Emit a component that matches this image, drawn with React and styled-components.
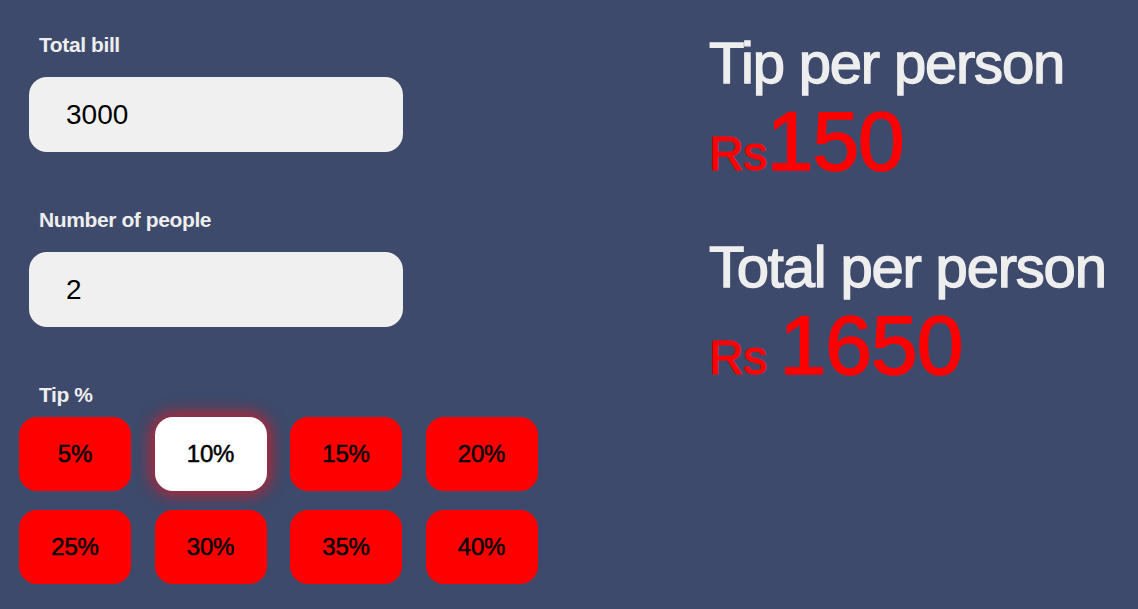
import React, { useState } from 'react';
import styled, { createGlobalStyle } from 'styled-components';

const GlobalStyle = createGlobalStyle`
  html, body {
    margin: 0;
    padding: 0;
    background: #3d4a6b;
  }
  body {
    font-family: 'Liberation Sans', Arial, sans-serif;
  }
`;

const Page = styled.main`
  display: flex;
  align-items: flex-start;
  min-height: 609px;
  padding: 0 19px;
  box-sizing: border-box;
`;

const Left = styled.section`
  width: 519px;
  padding-top: 33px;
`;

const Label = styled.label`
  display: block;
  margin-left: 20px;
  font-size: 21px;
  line-height: 24px;
  font-weight: 700;
  letter-spacing: -0.4px;
  color: #eeeeee;
`;

const Input = styled.input`
  display: block;
  box-sizing: border-box;
  width: 374px;
  height: 75px;
  margin: 20px 0 56px 10px;
  padding: 0 0 0 37px;
  border: none;
  border-radius: 18px;
  background: #f0f0f0;
  font-family: 'Liberation Sans', Arial, sans-serif;
  font-size: 28px;
  color: #000;
  outline: none;
`;

const TipGrid = styled.div`
  display: grid;
  grid-template-columns: repeat(4, 112px);
  grid-auto-rows: 74px;
  column-gap: 23.5px;
  row-gap: 19px;
  margin-top: 10px;
`;

const TipButton = styled.button`
  border: none;
  border-radius: 18px;
  background: ${(p) => (p.$active ? '#ffffff' : '#ff0000')};
  box-shadow: ${(p) => (p.$active ? '0 0 16px 3px rgba(235, 20, 30, 0.8)' : 'none')};
  font-family: 'Liberation Sans', Arial, sans-serif;
  font-size: 24px;
  letter-spacing: -0.2px;
  -webkit-text-stroke: 0.5px #000;
  color: #000;
  cursor: pointer;
  padding: 0;
`;

const Right = styled.section`
  margin-left: 171px;
  padding-top: 31px;
`;

const Heading = styled.h2`
  margin: 0;
  font-size: 58px;
  line-height: 64px;
  font-weight: 400;
  letter-spacing: -1.2px;
  -webkit-text-stroke: 1.4px #eeeeee;
  color: #eeeeee;
`;

const Value = styled.div`
  margin: 4px 0 52px;
  font-size: 84px;
  line-height: 84px;
  letter-spacing: -1px;
  -webkit-text-stroke: 1.6px #ff0000;
  color: #ff0000;
  white-space: nowrap;
`;

const Currency = styled.span`
  font-size: 48px;
  line-height: 1;
  letter-spacing: -0.5px;
  -webkit-text-stroke: 1.2px #ff0000;
`;

const tips = [5, 10, 15, 20, 25, 30, 35, 40];

const App = () => {
  const [bill, setBill] = useState('3000');
  const [people, setPeople] = useState('2');
  const [tip, setTip] = useState(10);

  const b = parseFloat(bill) || 0;
  const n = parseFloat(people) || 1;
  const tipPer = (b * tip) / 100 / n;
  const totalPer = b / n + tipPer;

  return (
    <>
      <GlobalStyle />
      <Page>
        <Left>
          <Label htmlFor="bill">Total bill</Label>
          <Input id="bill" value={bill} onChange={(e) => setBill(e.target.value)} />
          <Label htmlFor="people">Number of people</Label>
          <Input id="people" value={people} onChange={(e) => setPeople(e.target.value)} />
          <Label>Tip %</Label>
          <TipGrid>
            {tips.map((t) => (
              <TipButton key={t} $active={t === tip} onClick={() => setTip(t)}>
                {t}%
              </TipButton>
            ))}
          </TipGrid>
        </Left>
        <Right>
          <Heading>Tip per person</Heading>
          <Value>
            <Currency>Rs</Currency>
            {Math.round(tipPer)}
          </Value>
          <Heading>Total per person</Heading>
          <Value>
            <Currency>Rs </Currency>
            {Math.round(totalPer)}
          </Value>
        </Right>
      </Page>
    </>
  );
};

export default App;
